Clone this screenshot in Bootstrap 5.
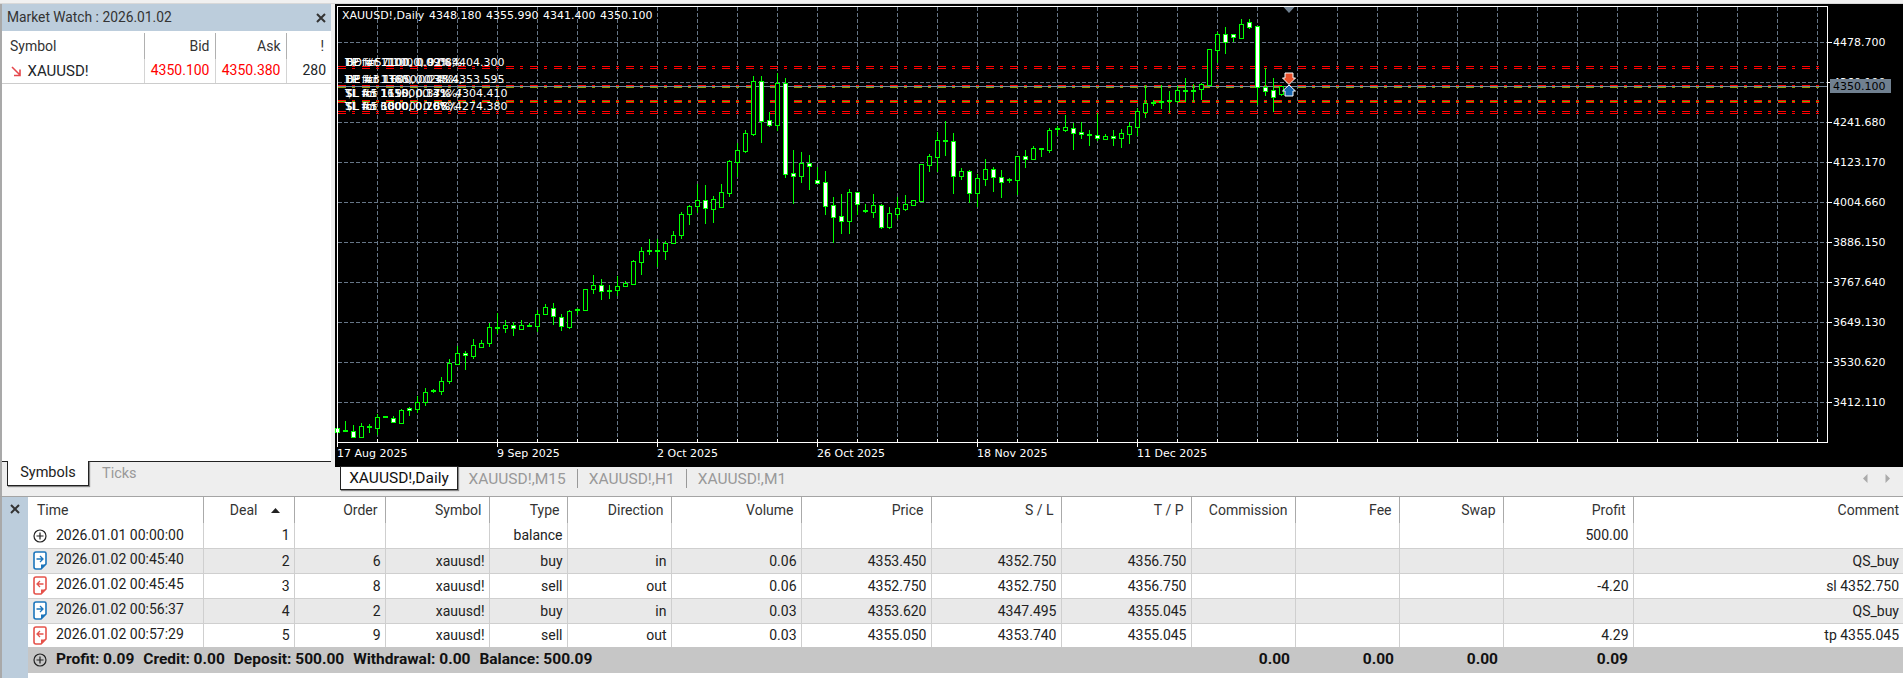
<!DOCTYPE html>
<html lang="en">
<head>
<meta charset="utf-8">
<title>MetaTrader Strategy Tester</title>
<link href="https://cdn.jsdelivr.net/npm/bootstrap@5.3.0/dist/css/bootstrap.min.css" rel="stylesheet">
<style>
html,body{margin:0;width:1903px;height:678px;overflow:hidden;background:#eeeeee;font-family:Roboto,"Liberation Sans",sans-serif;font-size:14px;color:#222}
.top-strip{height:4px;background:#f0f0f0;border-bottom:1px solid #d8d8d8}
.upper-area{height:492px}
.watch-pane{width:329px;margin-left:2px;box-shadow:-2px 0 0 #a9a9a9}
.watch-title{height:27px;background:#bccddc;padding:0 5px;color:#333;font-size:13.8px;line-height:27px}
.watch-body{height:431px;background:#fff;padding-top:2px;border-bottom:1px solid #222}
.close-mark{width:10px;height:10px;display:block}
.mini-table{table-layout:fixed;width:329px;margin:0;border-collapse:collapse;vertical-align:middle}
.mini-table th,.mini-table td{padding:0 5px;font-weight:400;background:transparent;border:0;border-right:1px solid #d4d4d4;vertical-align:middle}
.mini-table th{height:26px;color:#333;border-right-color:#b0b0b0}
.mini-table th.text-start{padding-left:8px}
.mini-table td{height:24px;border-bottom:1px solid #ccc}
.mini-table tr>*:last-child{border-right:0}
.price-down{color:#f00}
.sym-name{font-size:15px;margin-left:6px}
.pane-tabs{height:34px;padding-left:5px}
.tab-on{width:82px;height:25px;margin-top:-1px;background:#fff;border:1px solid #222;border-top:0;box-shadow:1px 1px 1px #888;line-height:24px;text-align:center;font-size:14.5px}
.tab-off{color:#999;margin-left:13px;line-height:24px;font-size:14.5px}
.chart-col{width:1568px;margin-left:4px}
.chart-svg{display:block;width:1568px;height:463px;background:#000}
.chart-svg text{font-family:"DejaVu Sans",sans-serif;font-size:11px;fill:#fff}
.chart-tabs{height:29px;padding-left:5px;position:relative}
.tab-active{width:118px;height:24px;margin-top:-1px;background:#fff;border:1px solid #222;box-shadow:1px 1px 1px #888;text-align:center;line-height:23px;font-size:15.5px;color:#111}
.tab-idle{color:#999;font-size:15.5px;line-height:24px}
.tab-sep{width:1px;height:19px;background:#999;margin:2px 11px 0}
.tab-arrows{position:absolute;right:13px;top:7px;gap:17px}
.lower-area{height:182px;border-top:1px solid #a4a4a4}
.side-strip{width:26px;margin-left:2px;background:#bccddc;padding:7px 0 0 8px;box-shadow:-2px 0 0 #a9a9a9}
.deal-wrap{width:1875px;background:#fff}
.deal-table{table-layout:fixed;width:1875px;margin:0;border-collapse:collapse;vertical-align:middle}
.deal-table th,.deal-table td{padding:0 4px 0 0;text-align:right;white-space:nowrap;background:transparent;border:0;border-right:1px solid #cfcfcf;font-weight:400;color:#222;line-height:1;vertical-align:middle}
.deal-table tr>*:last-child{border-right:0;padding-right:4px}
.deal-table thead th{height:26px;color:#333;padding-right:7px;border-right-color:#aaa}
.deal-table tbody td{height:25px;border-bottom:1px solid #cfcfcf}
.deal-table tbody tr.shade td{background:#e9e9e9}
.deal-table tbody tr:nth-child(5) td{border-bottom:0;height:24px}
.deal-table tfoot td{height:26px;background:#c6c6c6;font-weight:700;font-size:15.5px;border-right:0;color:#111;padding-right:5px}
.deal-table .cell-time{text-align:left;padding-left:5px}
.deal-table thead .cell-time{padding-left:9px}
.row-ico{display:inline-block;vertical-align:middle;margin-right:9px}
.summary-gap{margin-right:9px}
.sort-mark{display:inline-block;margin-left:13px;margin-right:7px;vertical-align:2px}
</style>
</head>
<body>
<div class="top-strip"></div>
<div class="upper-area d-flex">
  <section class="watch-pane d-flex flex-column">
    <div class="watch-title d-flex justify-content-between align-items-center">
      <span>Market Watch : 2026.01.02</span>
      <svg class="close-mark" viewBox="0 0 10 10"><path d="M1 1 9 9M9 1 1 9" stroke="#333" stroke-width="2"/></svg>
    </div>
    <div class="watch-body">
      <table class="table mini-table">
        <colgroup><col style="width:142px"><col style="width:71px"><col style="width:71px"><col></colgroup>
        <thead><tr><th class="text-start">Symbol</th><th class="text-end">Bid</th><th class="text-end">Ask</th><th class="text-end pe-2">!</th></tr></thead>
        <tbody><tr>
          <td class="text-start"><svg width="11" height="11" viewBox="0 0 11 11" class="ms-1"><path d="M1 1 9 9M9 3.5V9.5H3" fill="none" stroke="#e5484d" stroke-width="1.6"/></svg><span class="sym-name">XAUUSD!</span></td>
          <td class="text-end price-down">4350.100</td><td class="text-end price-down">4350.380</td><td class="text-end">280</td>
        </tr></tbody>
      </table>
    </div>
    <div class="pane-tabs d-flex align-items-start">
      <div class="tab-on">Symbols</div>
      <div class="tab-off">Ticks</div>
    </div>
  </section>
  <section class="chart-col d-flex flex-column">
    <svg class="chart-svg" id="chart" viewBox="335 4 1568 463" xmlns="http://www.w3.org/2000/svg">
      <g id="gridLayer"></g>
      <g id="levelLayer"></g>
      <g id="candleLayer"></g>
      <rect x="337.5" y="6.5" width="1490" height="436" fill="none" stroke="#fff"/>
      <g id="tickLayer" stroke="#fff"></g>
      <path d="M1283.5 7H1294.5L1289 13Z" fill="#708090"/>
      <text x="342" y="19">XAUUSD!,Daily</text>
      <text x="429" y="19">4348.180</text><text x="486" y="19">4355.990</text><text x="543" y="19">4341.400</text><text x="600" y="19">4350.100</text>
      <g>
        <text x="345" y="66">TP for 1100, 0.09%</text><text x="346" y="66">BE fct 7100, 0.92%,</text><text x="345" y="66">DD #5 11000, 0.08%</text><text x="452" y="66">4404.300</text>
        <text x="345" y="83">TP for 1360, 0.03%</text><text x="346" y="83">BE fct 11850, 0.38%,</text><text x="345" y="83">DP #3 1600, 0.24%</text><text x="452" y="83">4353.595</text>
        <text x="345" y="97">SL for 1150, 0.14%</text><text x="346" y="97">$L fct 16150, 0.31%/</text><text x="345" y="97">TL #5 1190, 0.37%</text><text x="455" y="97">4304.410</text>
        <text x="345" y="110">SL for 3000, 0.70%</text><text x="346" y="110">$L fct 6000, 0.26%/</text><text x="345" y="110">TL #5 18000, 0.86%</text><text x="455" y="110">4274.380</text>
      </g>
      <path d="M1285 73H1293V78H1295.500L1289 84.500 1282.500 78H1285Z" fill="#e8502a" stroke="#fff"/>
      <path d="M1285 96H1293V91H1295.500L1289 85 1282.500 91H1285Z" fill="#1766b0" stroke="#fff"/>
      <g id="axisLayer"></g>
      <rect x="1830" y="79" width="61" height="14" fill="#708090"/>
      <text x="1833" y="90" style="fill:#000">4350.100</text>
    </svg>
    <div class="chart-tabs d-flex align-items-start">
      <div class="tab-active">XAUUSD!,Daily</div>
      <div class="tab-idle ms-2 ps-1">XAUUSD!,M15</div><div class="tab-sep"></div>
      <div class="tab-idle">XAUUSD!,H1</div><div class="tab-sep"></div>
      <div class="tab-idle">XAUUSD!,M1</div>
      <div class="tab-arrows d-flex">
        <svg width="5" height="9" viewBox="0 0 5 9"><path d="M4.500 0V9L0 4.500Z" fill="#aaa"/></svg>
        <svg width="5" height="9" viewBox="0 0 5 9"><path d="M.5 0V9L5 4.500Z" fill="#aaa"/></svg>
      </div>
    </div>
  </section>
</div>
<div class="lower-area d-flex">
  <div class="side-strip">
    <svg class="close-mark" viewBox="0 0 10 10"><path d="M1 1 9 9M9 1 1 9" stroke="#333" stroke-width="2"/></svg>
  </div>
  <div class="deal-wrap">
    <table class="table deal-table">
      <colgroup>
        <col style="width:175px"><col style="width:91px"><col style="width:91px"><col style="width:104px"><col style="width:78px"><col style="width:104px"><col style="width:130px"><col style="width:130px"><col style="width:130px"><col style="width:130px"><col style="width:104px"><col style="width:104px"><col style="width:104px"><col style="width:130px"><col style="width:270px">
      </colgroup>
      <thead>
        <tr><th class="cell-time">Time</th><th>Deal<svg class="sort-mark" width="9" height="5" viewBox="0 0 9 5"><path d="M0 5 4.500 0 9 5Z" fill="#222"/></svg></th><th>Order</th><th>Symbol</th><th>Type</th><th>Direction</th><th>Volume</th><th>Price</th><th>S / L</th><th>T / P</th><th>Commission</th><th>Fee</th><th>Swap</th><th>Profit</th><th>Comment</th></tr>
      </thead>
      <tbody>
        <tr><td class="cell-time"><svg class="row-ico" width="14" height="14" viewBox="0 0 14 14"><circle cx="7" cy="7" r="6" fill="none" stroke="#222" stroke-width="1.200"/><path d="M3.500 7h7M7 3.500v7" stroke="#222" stroke-width="1.200"/></svg>2026.01.01 00:00:00</td><td>1</td><td></td><td></td><td>balance</td><td></td><td></td><td></td><td></td><td></td><td></td><td></td><td></td><td>500.00</td><td></td></tr>
        <tr class="shade"><td class="cell-time"><svg class="row-ico" width="14" height="19" viewBox="0 0 14 19"><path d="M3 1H11.500Q13 1 13 2.500V13L8 18H3Q1 18 1 16V3Q1 1 3 1Z" fill="#fff" stroke="#1b75bc" stroke-width="1.600"/><path d="M8 18V13.500H13L8.500 18Z" fill="#1b75bc"/><path d="M3.500 8H9.500M7 5 10 8 7 11" fill="none" stroke="#1b75bc" stroke-width="1.300"/></svg>2026.01.02 00:45:40</td><td>2</td><td>6</td><td>xauusd!</td><td>buy</td><td>in</td><td>0.06</td><td>4353.450</td><td>4352.750</td><td>4356.750</td><td></td><td></td><td></td><td></td><td>QS_buy</td></tr>
        <tr><td class="cell-time"><svg class="row-ico" width="14" height="19" viewBox="0 0 14 19"><path d="M3 1H11.500Q13 1 13 2.500V13L8 18H3Q1 18 1 16V3Q1 1 3 1Z" fill="#fff" stroke="#e5534b" stroke-width="1.600"/><path d="M8 18V13.500H13L8.500 18Z" fill="#e5534b"/><path d="M10.500 8H4.500M7 5 4 8 7 11" fill="none" stroke="#e5534b" stroke-width="1.300"/></svg>2026.01.02 00:45:45</td><td>3</td><td>8</td><td>xauusd!</td><td>sell</td><td>out</td><td>0.06</td><td>4352.750</td><td>4352.750</td><td>4356.750</td><td></td><td></td><td></td><td>-4.20</td><td>sl 4352.750</td></tr>
        <tr class="shade"><td class="cell-time"><svg class="row-ico" width="14" height="19" viewBox="0 0 14 19"><path d="M3 1H11.500Q13 1 13 2.500V13L8 18H3Q1 18 1 16V3Q1 1 3 1Z" fill="#fff" stroke="#1b75bc" stroke-width="1.600"/><path d="M8 18V13.500H13L8.500 18Z" fill="#1b75bc"/><path d="M3.500 8H9.500M7 5 10 8 7 11" fill="none" stroke="#1b75bc" stroke-width="1.300"/></svg>2026.01.02 00:56:37</td><td>4</td><td>2</td><td>xauusd!</td><td>buy</td><td>in</td><td>0.03</td><td>4353.620</td><td>4347.495</td><td>4355.045</td><td></td><td></td><td></td><td></td><td>QS_buy</td></tr>
        <tr><td class="cell-time"><svg class="row-ico" width="14" height="19" viewBox="0 0 14 19"><path d="M3 1H11.500Q13 1 13 2.500V13L8 18H3Q1 18 1 16V3Q1 1 3 1Z" fill="#fff" stroke="#e5534b" stroke-width="1.600"/><path d="M8 18V13.500H13L8.500 18Z" fill="#e5534b"/><path d="M10.500 8H4.500M7 5 4 8 7 11" fill="none" stroke="#e5534b" stroke-width="1.300"/></svg>2026.01.02 00:57:29</td><td>5</td><td>9</td><td>xauusd!</td><td>sell</td><td>out</td><td>0.03</td><td>4355.050</td><td>4353.740</td><td>4355.045</td><td></td><td></td><td></td><td>4.29</td><td>tp 4355.045</td></tr>
      </tbody>
      <tfoot>
        <tr><td colspan="10" class="cell-time"><svg class="row-ico" width="14" height="14" viewBox="0 0 14 14"><circle cx="7" cy="7" r="6" fill="none" stroke="#222" stroke-width="1.200"/><path d="M3.500 7h7M7 3.500v7" stroke="#222" stroke-width="1.200"/></svg><span class="summary-gap">Profit: 0.09</span><span class="summary-gap">Credit: 0.00</span><span class="summary-gap">Deposit: 500.00</span><span class="summary-gap">Withdrawal: 0.00</span><span>Balance: 500.09</span></td><td>0.00</td><td>0.00</td><td>0.00</td><td>0.09</td><td></td></tr>
      </tfoot>
    </table>
  </div>
</div>
<script>
(function(){
  var NS='http://www.w3.org/2000/svg';
  function el(parent,name,attrs,text){var e=document.createElementNS(NS,name);for(var k in attrs)e.setAttribute(k,attrs[k]);if(text)e.textContent=text;document.getElementById(parent).appendChild(e);return e;}
  /* grid */
  for(var x=377.5;x<1827;x+=40)el('gridLayer','path',{d:'M'+x+' 7V442',stroke:'#667687','stroke-dasharray':'4 2'});
  for(var y=42.5;y<442;y+=40)el('gridLayer','path',{d:'M338 '+y+'H1827',stroke:'#667687','stroke-dasharray':'4 2'});
  /* levels */
  [66.5,68.5,85.5,100.5,102.5,111.5,113.5].forEach(function(v){el('levelLayer','path',{d:'M338 '+v+'H1826',stroke:'#f00','stroke-dasharray':'8 6 3 7'});});
  [[87.5,'#8f9a00'],[101.5,'#5fb000']].forEach(function(l){el('levelLayer','path',{d:'M338 '+l[0]+'H1826',stroke:l[1],'stroke-dasharray':'8 6 3 7'});});
  el('levelLayer','path',{d:'M337 86.500H1827',stroke:'#778899'});
  /* candles: [top,bottom,wickTop,wickBottom,kind] kind: h hollow, w white, f flat */
  var A=[[685,695,685,695,'w'],[692,692,663,695,'f'],[692,710,676,710,'w'],[677,710,670,712,'h'],[677,682,672,698,'w'],[650,683,643,704,'h'],[651,651,648,655,'f'],[653,667,648,670,'w'],[631,668,628,670,'h'],[625,631,621,647,'w'],[607,626,588,638,'h'],[575,607,565,617,'h'],[573,573,568,578,'f'],[542,572,530,585,'h'],[490,542,476,552,'h'],[458,491,438,495,'h'],[458,466,453,510,'w'],[434,467,418,476,'h'],[428,440,420,443,'h'],[382,428,368,441,'h'],[384,384,338,402,'f'],[374,385,361,400,'h'],[374,385,365,408,'w'],[376,386,361,389,'h'],[374,379,368,382,'w'],[341,379,331,397,'h'],[322,341,312,344,'h'],[323,349,309,374,'w'],[350,379,342,392,'w'],[334,380,330,387,'h'],[331,331,325,346,'f'],[268,331,268,333,'h'],[254,268,225,282,'h'],[254,274,237,299,'w'],[272,272,256,297,'f'],[257,271,229,289,'h'],[250,259,243,262,'h'],[184,251,181,254,'h'],[152,185,142,225,'h'],[152,152,117,165,'f'],[152,152,118,200,'f'],[129,154,123,180,'h'],[106,128,94,131,'h'],[43,106,37,116,'h'],[19,43,15,74,'h'],[1,19,-48,38,'h']];
  var B=[[421,443,375,492,'w'],[418,446,408,489,'h'],[397,440,372,441,'h'],[304,398,300,411,'h'],[271,305,250,350,'h'],[220,272,210,279,'h'],[64,221,48,228,'h'],[64,182,48,249,'w'],[181,194,155,201,'w'],[69,194,40,213,'h'],[70,341,54,354,'w'],[340,347,270,432,'w'],[310,347,276,369,'h'],[310,319,285,390,'w'],[361,368,321,371,'w'],[367,437,333,465,'w'],[436,470,411,548,'w'],[469,482,402,522,'w'],[397,482,387,522,'h'],[397,431,397,466,'w'],[452,452,432,458,'f'],[436,455,402,474,'h'],[436,500,433,507,'w'],[460,500,441,507,'h'],[445,461,411,476,'h'],[433,446,405,453,'h'],[421,434,421,438,'h'],[313,422,313,424,'h'],[289,314,282,336,'h'],[241,290,217,336,'h'],[242,242,183,288,'f'],[244,347,219,402,'w'],[334,347,324,360,'h'],[334,398,330,429,'w'],[355,398,343,440,'h'],[328,356,297,378,'h'],[328,352,321,396,'w'],[352,367,331,414,'w'],[359,359,353,369,'f'],[289,359,289,404,'h'],[289,298,270,324,'w'],[265,298,259,300,'h'],[267,267,264,291,'f'],[211,269,205,279,'h'],[208,208,198,228,'f'],[202,209,165,216,'h'],[203,218,190,270,'w'],[217,223,187,237,'w'],[225,225,210,258,'f'],[226,233,160,244,'w'],[229,236,222,237,'h'],[229,235,210,258,'w'],[220,235,207,264,'h'],[199,221,187,252,'h'],[154,200,143,228,'h'],[130,155,75,174,'h'],[128,128,120,138,'f'],[126,126,76,147,'f'],[122,122,94,160,'f'],[91,122,77,128,'h'],[92,92,54,126,'f']];
  var C=[[272,272,252,305,'f'],[253,268,250,300,'h'],[148,255,148,258,'h'],[103,149,97,188,'h'],[103,127,81,162,'w'],[103,112,103,127,'w'],[73,113,57,117,'h'],[67,80,57,86,'w'],[78,262,78,315,'w'],[262,272,205,288,'w'],[271,292,235,335,'w'],[258,282,258,288,'h']];
  function conv(list,base){return list.map(function(c){return [base+c[0]/3,base+c[1]/3,base+c[2]/3,base+c[3]/3,c[4]];});}
  var all=conv(A,200).concat(conv(B,60),conv(C,0));
  all.forEach(function(c,i){
    var x=337.5+8*i,wt=Math.max(7,Math.round(c[2])),wb=Math.round(c[3]),t=Math.round(c[0]),b=Math.round(c[1]);
    el('candleLayer','path',{d:'M'+x+' '+wt+'V'+wb,stroke:'#0f0'});
    if(c[4]==='f'){el('candleLayer','rect',{x:x-2.5,y:t-1,width:5,height:2,fill:'#0f0'});}
    else{el('candleLayer','rect',{x:x-2,y:t+.5,width:4,height:Math.max(b-t,1),fill:c[4]==='w'?'#fff':'#000',stroke:'#0f0'});}
  });
  /* axis */
  var prices=['4478.700','4360.190','4241.680','4123.170','4004.660','3886.150','3767.640','3649.130','3530.620','3412.110'];
  prices.forEach(function(p,i){var y=42+40*i;el('tickLayer','path',{d:'M1827 '+(y+.5)+'H1832'});el('axisLayer','text',{x:1833,y:y+4},p);});
  for(var t=337.5;t<1827;t+=40)el('tickLayer','path',{d:'M'+t+' 439V442'});
  [['17 Aug 2025',337],['9 Sep 2025',497],['2 Oct 2025',657],['26 Oct 2025',817],['18 Nov 2025',977],['11 Dec 2025',1137]].forEach(function(d){el('tickLayer','path',{d:'M'+(d[1]+.5)+' 442V447'});el('axisLayer','text',{x:d[1],y:457},d[0]);});
})();
</script>
<script src="https://cdn.jsdelivr.net/npm/bootstrap@5.3.0/dist/js/bootstrap.bundle.min.js"></script>
</body>
</html>
